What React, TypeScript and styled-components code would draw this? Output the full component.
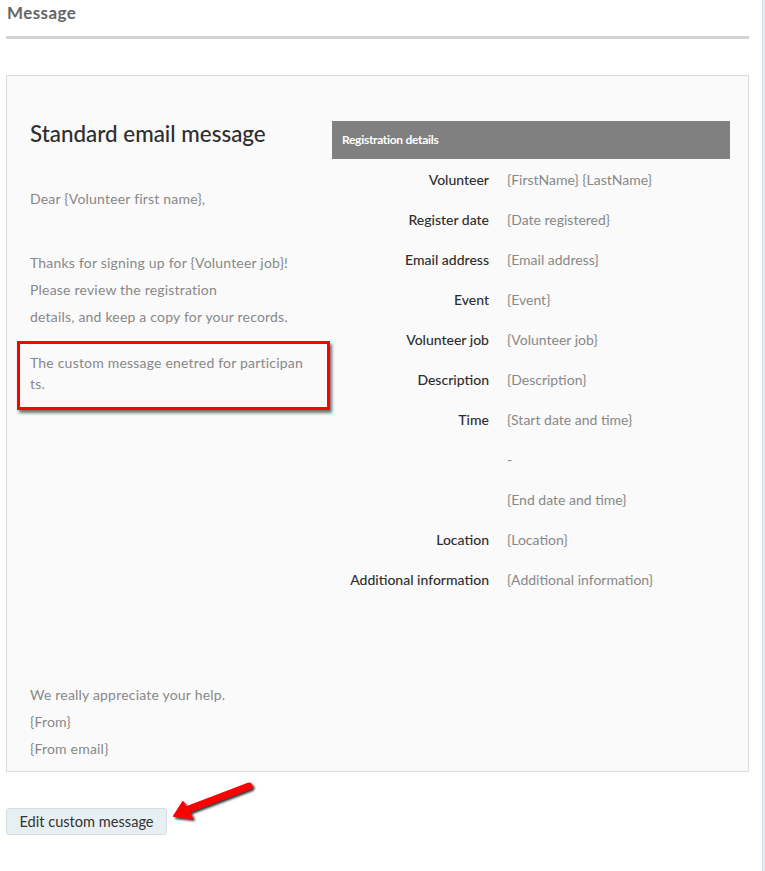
import * as React from 'react';
import styled, { createGlobalStyle } from 'styled-components';

const GlobalStyle = createGlobalStyle`
  html, body {
    margin: 0;
    padding: 0;
    background: #fff;
  }
  body {
    font-family: "Lato", "Open Sans", Arial, sans-serif;
  }
`;

// Registration rows shown on the right side of the preview.
const rows: [string, string][] = [
  ['Volunteer', '{FirstName} {LastName}'],
  ['Register date', '{Date registered}'],
  ['Email address', '{Email address}'],
  ['Event', '{Event}'],
  ['Volunteer job', '{Volunteer job}'],
  ['Description', '{Description}'],
  ['Time', '{Start date and time}'],
  ['', '-'],
  ['', '{End date and time}'],
  ['Location', '{Location}'],
  ['Additional information', '{Additional information}'],
];

const App = () => {
  return (
    <Page>
      <GlobalStyle />
      <Main>
        <SectionTitle>Message</SectionTitle>
        <Rule />
        <Preview>
          <LeftCol>
            <EmailTitle>Standard email message</EmailTitle>
            <Paragraph>Dear {'{'}Volunteer first name{'}'},</Paragraph>
            <Paragraph gap={37}>
              Thanks for signing up for {'{'}Volunteer job{'}'}!<br />
              Please review the registration<br />
              details, and keep a copy for your records.
            </Paragraph>
            <CustomBox>The custom message enetred for participan ts.</CustomBox>
            <Closing>
              We really appreciate your help.<br />
              {'{'}From{'}'}<br />
              {'{'}From email{'}'}
            </Closing>
          </LeftCol>
          <RightCol>
            <DetailsHeader>Registration details</DetailsHeader>
            <DetailsGrid>
              {rows.map(([label, value], i) => (
                <React.Fragment key={i}>
                  <Label>{label}</Label>
                  <Value>{value}</Value>
                </React.Fragment>
              ))}
            </DetailsGrid>
          </RightCol>
        </Preview>
        <Footer>
          <EditButton>Edit custom message</EditButton>
          <Arrow width="90" height="50" viewBox="0 0 90 50">
            <defs>
              <filter id="sh" x="-20%" y="-20%" width="150%" height="160%">
                <feGaussianBlur in="SourceAlpha" stdDeviation="1.2" />
                <feOffset dx="2" dy="2" />
                <feComponentTransfer><feFuncA type="linear" slope="0.8" /></feComponentTransfer>
                <feMerge><feMergeNode /><feMergeNode in="SourceGraphic" /></feMerge>
              </filter>
            </defs>
            <g filter="url(#sh)">
              <line x1="85" y1="6" x2="22" y2="30" stroke="#f00" strokeWidth="7" strokeLinecap="round" />
              <polygon points="10,36 19,22 28,38" fill="#f00" stroke="#f00" strokeWidth="2" strokeLinejoin="round" />
            </g>
          </Arrow>
        </Footer>
      </Main>
      <SideStrip />
    </Page>
  );
};

const Page = styled.div`
  display: flex;
  min-height: 871px;
`;

const Main = styled.div`
  width: 743px;
  padding: 0 13px 0 6px;
`;

const SideStrip = styled.div`
  flex: 1;
  background: #e6edf2;
  border-left: 1px solid #d6dee4;
`;

const SectionTitle = styled.div`
  font-family: "Lato", Arial, sans-serif;
  font-weight: 700;
  font-size: 17px;
  letter-spacing: 0.4px;
  line-height: 26px;
  color: #666;
  padding-left: 1px;
`;

const Rule = styled.div`
  height: 3px;
  background: #d4d4d4;
  margin-top: 10px;
`;

const Preview = styled.div`
  margin-top: 36px;
  border: 1px solid #dcdcdc;
  background: #fafafa;
  display: flex;
  padding: 45px 18px 9px 23px;
  height: 641px;
`;

const LeftCol = styled.div`
  width: 279px;
  display: flex;
  flex-direction: column;
  font-size: 14px;
  color: #888;
`;

const EmailTitle = styled.div`
  font-size: 22.4px;
  line-height: 25px;
  color: #2e2e2e;
  font-weight: 500;
  margin-bottom: 39px;
`;

const Paragraph = styled.div<{ gap?: number }>`
  line-height: 27px;
  letter-spacing: 0.2px;
  margin-top: ${p => p.gap || 0}px;
`;

const CustomBox = styled.div`
  margin: 11px -21px 0 -13px;
  border: 3px solid #f00;
  box-shadow: 2px 3px 3px rgba(0, 0, 0, 0.55);
  padding: 8px 14px 13px 10px;
  line-height: 21px;
  letter-spacing: 0.2px;
`;

const Closing = styled.div`
  margin-top: auto;
  line-height: 27px;
  letter-spacing: 0.2px;
`;

const RightCol = styled.div`
  flex: 1;
  margin-left: 23px;
`;

const DetailsHeader = styled.div`
  height: 38px;
  line-height: 38px;
  background: #808080;
  color: #fff;
  font-weight: 700;
  font-size: 12px;
  letter-spacing: -0.3px;
  padding-left: 10px;
`;

const DetailsGrid = styled.div`
  display: grid;
  grid-template-columns: 157px 1fr;
  column-gap: 18px;
  grid-auto-rows: 40px;
  font-size: 14px;
  align-items: center;
`;

const Label = styled.div`
  text-align: right;
  color: #2e2e2e;
  font-weight: 500;
`;

const Value = styled.div`
  color: #888;
`;

const Footer = styled.div`
  position: relative;
  margin-top: 36px;
`;

const EditButton = styled.button`
  font-family: "Lato", Arial, sans-serif;
  font-size: 14.6px;
  color: #333;
  background: #e7eff3;
  border: 1px solid #d3dde2;
  border-radius: 3px;
  height: 27px;
  width: 161px;
  padding: 0;
  cursor: pointer;
`;

const Arrow = styled.svg`
  position: absolute;
  left: 158px;
  top: -28px;
  overflow: visible;
`;

export default App;
